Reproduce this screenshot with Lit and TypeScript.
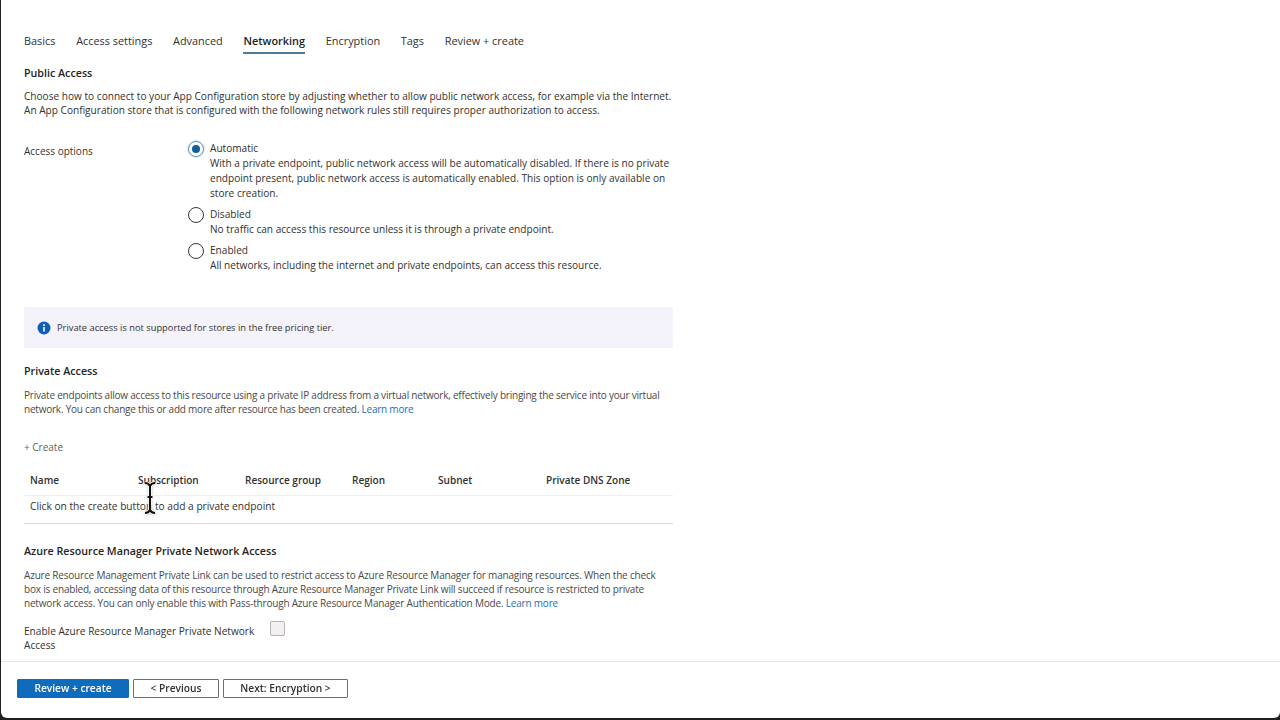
import { LitElement, html, css } from "lit";
import { customElement } from "lit/decorators.js";

@customElement("app-root")
export class AppRoot extends LitElement {
  static styles = css`
    :host { display: block; width: 1280px; height: 720px; background: #1f1f24; font-family: "Open Sans", "Noto Sans", sans-serif; color: #323130; font-size: 10.1px; line-height: 14px; overflow: hidden; white-space: nowrap; }
    .win { position: relative; height: 718px; margin-left: 1px; background: #fff; border-bottom-left-radius: 6px; border-bottom-right-radius: 6px; display: flex; flex-direction: column; filter: blur(0.3px); }
    .main { flex: 0 0 661px; box-sizing: border-box; padding: 0 0 0 23px; width: 672px; overflow: hidden; }
    .tabs { display: flex; gap: 20.7px; padding-top: 34px; height: 20px; font-size: 10.9px; }
    .tab { height: 18px; color: #323130; }
    .tab.on { color: #201f1e; font-weight: 600; border-bottom: 2px solid #4a7d9e; }
    h2 { margin: 0; font-size: 10.7px; line-height: 14px; font-weight: 600; color: #252423; }
    h2.pub { margin-top: 12px; }
    p { margin: 0; }
    .intro { margin-top: 9px; }
    .opts { display: grid; grid-template-columns: 164px 1fr; margin-top: 24px; }
    .lbl { padding-top: 3px; font-size: 10px; }
    .radios { display: flex; flex-direction: column; gap: 6px; }
    .radio { display: flex; gap: 6px; }
    .circle { box-sizing: border-box; width: 16px; height: 16px; border: 1.2px solid #3b3a39; border-radius: 50%; flex: none; display: flex; align-items: center; justify-content: center; }
    .circle.on { border: 1px solid #5b93c4; box-shadow: 0 0 0 1px #dbe7f1; }
    .dot { width: 8px; height: 8px; border-radius: 50%; background: #0f5f9e; }
    .rtext div { line-height: 15px; }
    .info { display: flex; align-items: center; gap: 6px; height: 41px; margin-top: 34px; padding-left: 13px; background: #f4f3fb; font-size: 9.3px; }
    .info svg { flex: none; }
    h2.priv { margin-top: 16px; }
    .muted { color: #4a4947; font-size: 10px; }
    .privtext { margin-top: 10px; letter-spacing: -0.22px; }
    a { color: #1b6fb5; text-decoration: none; }
    .create { margin-top: 24px; color: #605e5c; font-size: 10px; }
    .table { margin-top: 12px; border-bottom: 1px solid #d9d8d6; }
    .row { display: grid; grid-template-columns: 108px 107px 107px 86px 108px 1fr; padding-left: 6px; }
    .head { box-sizing: content-box; height: 27px; padding-bottom: 2px; align-items: center; font-weight: 600; border-bottom: 1px solid #f0efee; color: #323130; font-size: 10.05px; }
    .empty { display: block; height: 27px; line-height: 21px; font-size: 10.2px; }
    h2.arm { margin-top: 20px; }
    .armtext { margin-top: 10px; letter-spacing: -0.19px; }
    .check { display: grid; grid-template-columns: 246px 16px; margin-top: 14px; font-size: 10.1px; white-space: normal; }
    .box { box-sizing: border-box; width: 15px; height: 15px; margin-top: -3px; border: 1px solid #b8b4b8; border-radius: 2px; background: #f3f0f2; }
    .foot { flex: 1; display: flex; align-items: flex-start; gap: 4px; padding: 17px 0 0 16px; border-top: 1px solid #e8e8e8; }
    .btn { box-sizing: border-box; height: 19px; border: 1px solid #6f6e6d; border-radius: 1px; background: #fff; color: #323130; font: 600 10.2px/17px "Open Sans", "Noto Sans", sans-serif; padding: 0; text-align: center; }
    .primary { width: 112px; background: #0f6cbd; border-color: #0f6cbd; color: #fff; }
    .prev { width: 86px; }
    .next { width: 125px; }
    .cursor { position: absolute; left: 142px; top: 481px; overflow: visible; }
    .halo { filter: blur(1.5px); }
  `;

  render() {
    return html`
      <div class="win">
        <div class="main">
          <div class="tabs">
            ${["Basics", "Access settings", "Advanced", "Networking", "Encryption", "Tags", "Review + create"].map(
              (t) => html`<div class="tab ${t === "Networking" ? "on" : ""}">${t}</div>`
            )}
          </div>
          <h2 class="pub">Public Access</h2>
          <p class="intro">Choose how to connect to your App Configuration store by adjusting whether to allow public network access, for example via the Internet.<br />An App Configuration store that is configured with the following network rules still requires proper authorization to access.</p>
          <div class="opts">
            <div class="lbl">Access options</div>
            <div class="radios">
              <div class="radio">
                <span class="circle on"><span class="dot"></span></span>
                <div class="rtext"><div>Automatic</div><div>With a private endpoint, public network access will be automatically disabled. If there is no private<br />endpoint present, public network access is automatically enabled. This option is only available on<br />store creation.</div></div>
              </div>
              <div class="radio">
                <span class="circle"></span>
                <div class="rtext"><div>Disabled</div><div>No traffic can access this resource unless it is through a private endpoint.</div></div>
              </div>
              <div class="radio">
                <span class="circle"></span>
                <div class="rtext"><div>Enabled</div><div>All networks, including the internet and private endpoints, can access this resource.</div></div>
              </div>
            </div>
          </div>
          <div class="info">
            <svg width="14" height="14" viewBox="0 0 14 14"><circle cx="7" cy="7" r="6.5" fill="#0f5fb8" /><rect x="6.2" y="6" width="1.6" height="4.6" fill="#fff" /><circle cx="7" cy="4" r="1" fill="#fff" /></svg>
            <span>Private access is not supported for stores in the free pricing tier.</span>
          </div>
          <h2 class="priv">Private Access</h2>
          <p class="privtext muted">Private endpoints allow access to this resource using a private IP address from a virtual network, effectively bringing the service into your virtual<br />network. You can change this or add more after resource has been created. <a>Learn more</a></p>
          <div class="create">+ Create</div>
          <div class="table">
            <div class="row head"><span>Name</span><span>Subscription</span><span>Resource group</span><span>Region</span><span>Subnet</span><span>Private DNS Zone</span></div>
            <div class="row empty">Click on the create button to add a private endpoint</div>
          </div>
          <h2 class="arm">Azure Resource Manager Private Network Access</h2>
          <p class="armtext muted">Azure Resource Management Private Link can be used to restrict access to Azure Resource Manager for managing resources. When the check<br />box is enabled, accessing data of this resource through Azure Resource Manager Private Link will succeed if resource is restricted to private<br />network access. You can only enable this with Pass-through Azure Resource Manager Authentication Mode. <a>Learn more</a></p>
          <div class="check"><span>Enable Azure Resource Manager Private Network Access</span><span class="box"></span></div>
        </div>
        <div class="foot">
          <button class="btn primary">Review + create</button>
          <button class="btn prev">&lt; Previous</button>
          <button class="btn next">Next: Encryption &gt;</button>
        </div>
        <svg class="cursor" width="14" height="34" viewBox="0 0 14 34">
          <path class="halo" d="M2 2 C5 2 6 3 7 5 C8 3 9 2 12 2 M7 5 V29 M2 32 C5 32 6 31 7 29 C8 31 9 32 12 32" fill="none" stroke="#999" stroke-width="4" opacity=".5" />
          <path d="M2 2 C5 2 6 3 7 5 C8 3 9 2 12 2 M7 5 V29 M2 32 C5 32 6 31 7 29 C8 31 9 32 12 32 M4 16 H10" fill="none" stroke="#fff" stroke-width="3.6" opacity=".85" />
          <path d="M2 2 C5 2 6 3 7 5 C8 3 9 2 12 2 M7 5 V29 M2 32 C5 32 6 31 7 29 C8 31 9 32 12 32 M4.5 16 H9.5" fill="none" stroke="#111" stroke-width="2" />
        </svg>
      </div>
    `;
  }
}
